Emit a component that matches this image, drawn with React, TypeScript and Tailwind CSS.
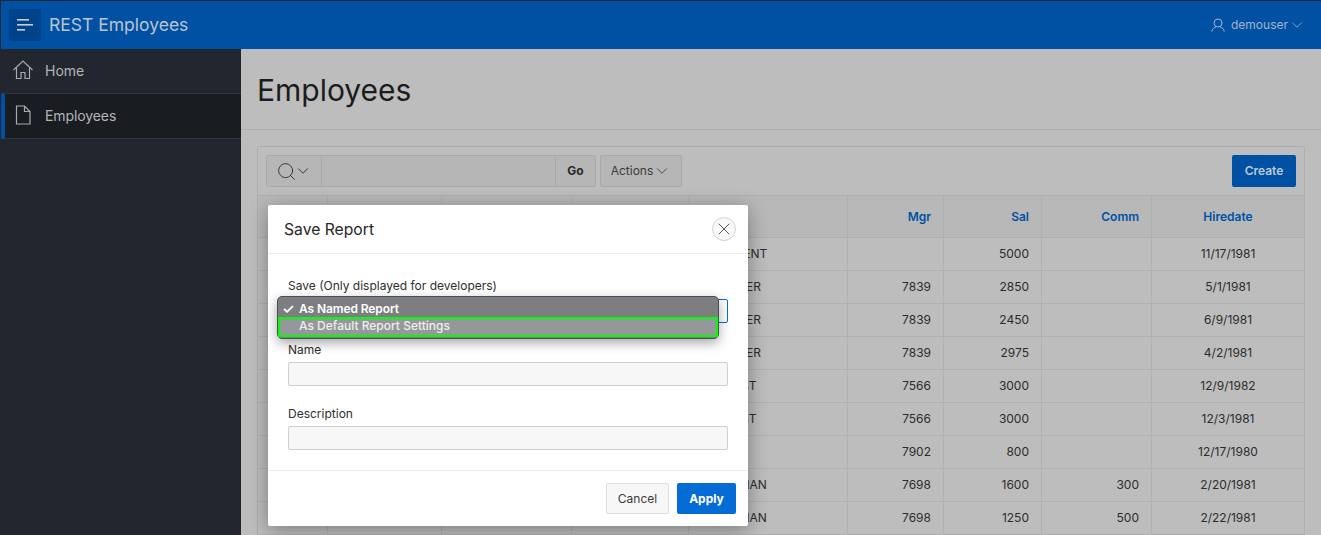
import { ChevronDown, Search, X } from "lucide-react";

const rows = [
  { job: "PRESIDENT", mgr: "", sal: "5000", comm: "", hire: "11/17/1981" },
  { job: "MANAGER", mgr: "7839", sal: "2850", comm: "", hire: "5/1/1981" },
  { job: "MANAGER", mgr: "7839", sal: "2450", comm: "", hire: "6/9/1981" },
  { job: "MANAGER", mgr: "7839", sal: "2975", comm: "", hire: "4/2/1981" },
  { job: "ANALYST", mgr: "7566", sal: "3000", comm: "", hire: "12/9/1982" },
  { job: "ANALYST", mgr: "7566", sal: "3000", comm: "", hire: "12/3/1981" },
  { job: "CLERK", mgr: "7902", sal: "800", comm: "", hire: "12/17/1980" },
  { job: "SALESMAN", mgr: "7698", sal: "1600", comm: "300", hire: "2/20/1981" },
  { job: "SALESMAN", mgr: "7698", sal: "1250", comm: "500", hire: "2/22/1981" },
];

const colTemplate = "grid-cols-[70px_114px_130px_117px_159px_96px_98px_110px_1fr]";

const HomeIcon = () => (
  <svg width="20" height="20" viewBox="0 0 20 20" fill="none" stroke="#a9abae" strokeWidth="1.2">
    <path d="M0.5 10 L10 1 L19.5 10" />
    <path d="M3.5 8 V18.5 H8 V12.5 H12 V18.5 H16.5 V8" />
  </svg>
);

const PageIcon = () => (
  <svg width="16" height="20" viewBox="0 0 16 20" fill="none" stroke="#a9abae" strokeWidth="1.2">
    <path d="M1.5 1 H9.5 L15 6.5 V19 H1.5 Z" />
    <path d="M9.5 1 V6.5 H15" />
  </svg>
);

const UserIcon = () => (
  <svg width="14" height="14" viewBox="0 0 14 14" fill="none" stroke="#a4b4c8" strokeWidth="1">
    <circle cx="7" cy="5" r="4" />
    <path d="M0.8 13.5 C1 10.8 3 9.6 5 9 M13.2 13.5 C13 10.8 11 9.6 9 9" />
  </svg>
);

function HeaderBar() {
  return (
    <header className="h-12 shrink-0 bg-[#0051a3] flex items-center pl-2 pr-[15px]">
      <button className="w-8 h-8 rounded-[2px] bg-[#00438a] flex items-center justify-center">
        <svg width="16" height="12" viewBox="0 0 16 12" fill="#c4ccd6">
          <rect x="0" y="0" width="12" height="1.6" />
          <rect x="0" y="5" width="16" height="1.6" />
          <rect x="0" y="10" width="8" height="1.6" />
        </svg>
      </button>
      <span className="ml-2 text-[17.5px] text-[#bcc4cf]">REST Employees</span>
      <div className="ml-auto flex items-center text-[12px] text-[#a4b4c8]">
        <UserIcon />
        <span className="ml-[6px]">demouser</span>
        <ChevronDown size={18} strokeWidth={1.1} />
      </div>
    </header>
  );
}

function Sidebar() {
  return (
    <nav className="w-[240px] shrink-0 bg-[#22262e] text-[14px] text-[#b4b5b7]">
      <div className="h-[45px] flex items-center gap-3 pl-3 pb-[2px] border-b border-[#32353b]">
        <HomeIcon />
        <span>Home</span>
      </div>
      <div className="h-[45px] flex items-center gap-[14px] pl-[14px] pb-[2px] bg-[#191c20] border-b border-[#32353b] border-l-[4px] border-l-[#0051a3]">
        <span className="-ml-[4px] flex">
          <PageIcon />
        </span>
        <span className="tracking-[-0.1px]">Employees</span>
      </div>
    </nav>
  );
}

function ReportToolbar() {
  return (
    <div className="h-[48px] flex items-center pl-2 pr-2 text-[12px] text-[#2a2a2a]">
      <div className="flex h-8 border border-[#a9a9a9] rounded-[2px] bg-[#b6b6b6]">
        <div className="w-[55px] flex items-center justify-center border-r border-[#a9a9a9]">
          <Search size={21} strokeWidth={1} />
          <ChevronDown size={18} strokeWidth={1.2} className="-ml-[3px]" />
        </div>
        <div className="w-[234px] border-r border-[#a9a9a9]" />
        <div className="w-[39px] flex items-center justify-center font-bold">Go</div>
      </div>
      <div className="ml-1 h-8 w-[82px] flex items-center justify-center border border-[#a9a9a9] rounded-[2px] bg-[#b6b6b6] text-[#3a3a3a]">
        Actions
        <ChevronDown size={18} strokeWidth={1.1} />
      </div>
      <button className="ml-auto h-8 w-16 rounded-[2px] bg-[#0051a3] text-[#bcc9d8] font-semibold">Create</button>
    </div>
  );
}

function ReportTable() {
  const cell = "border-r border-[#b0b0b0] last:border-r-0";
  return (
    <div className="text-[12px]">
      <div className={`grid ${colTemplate} h-[43px] bg-[#b8b8b8] border-y border-[#aeaeae] font-semibold text-[#0051a3]`}>
        <div className={cell} />
        <div className={cell} />
        <div className={cell} />
        <div className={cell} />
        <div className={cell} />
        <div className={`${cell} flex items-center justify-end pr-3`}>Mgr</div>
        <div className={`${cell} flex items-center justify-end pr-3`}>Sal</div>
        <div className={`${cell} flex items-center justify-end pr-3`}>Comm</div>
        <div className={`${cell} flex items-center justify-center`}>Hiredate</div>
      </div>
      {rows.map((row, i) => (
        <div key={i} className={`grid ${colTemplate} h-[33px] border-b border-[#b0b0b0] text-[#2c2c2c]`}>
          <div className={cell} />
          <div className={cell} />
          <div className={cell} />
          <div className={cell} />
          <div className={`${cell} flex items-center pl-[12px]`}>{row.job}</div>
          <div className={`${cell} flex items-center justify-end pr-3`}>{row.mgr}</div>
          <div className={`${cell} flex items-center justify-end pr-3`}>{row.sal}</div>
          <div className={`${cell} flex items-center justify-end pr-3`}>{row.comm}</div>
          <div className={`${cell} flex items-center justify-center`}>{row.hire}</div>
        </div>
      ))}
    </div>
  );
}

function SaveReportDialog() {
  return (
    <div className="absolute left-[268px] top-[205px] w-[480px] h-[321px] bg-white rounded-[2px] shadow-[0_4px_20px_rgba(0,0,0,0.35)] flex flex-col text-[#2e2e2e]">
      <div className="h-[49px] shrink-0 flex items-center justify-between pl-4 pr-3 border-b border-[#ececec]">
        <h2 className="text-[15.7px] text-[#262626] pt-[2px]">Save Report</h2>
        <button className="w-6 h-6 rounded-full border border-[#d4d4d4] bg-[#f8f8f8] flex items-center justify-center">
          <X size={20} strokeWidth={1} color="#333" />
        </button>
      </div>
      <div className="flex-1 px-5 pt-[24px] text-[12px]">
        <div className="leading-4">Save (Only displayed for developers)</div>
        <div className="relative mt-[5px] h-[24px] border border-[#056cd6] rounded-[2px]">
          <div className="absolute -left-[12px] -top-[4px] w-[442px] h-[43px] rounded-[5px] border border-[#4c4e52] bg-[#7c7e82] shadow-[0_4px_12px_rgba(0,0,0,0.35)] font-semibold text-white">
            <div className="h-[20px] flex items-center pl-[4px] pt-[3px]">
              <span className="w-[17px] text-[14px] leading-none">✓</span>
              <span className="tracking-[-0.1px]">As Named Report</span>
            </div>
            <div className="h-[20px] flex items-center pl-[19px] pb-[2px] bg-[#95989b] border-2 border-[#00ff00] rounded-[1px] text-[#eeeeee] font-medium">
              As Default Report Settings
            </div>
          </div>
        </div>
        <div className="mt-[19px] leading-4">Name</div>
        <div className="mt-[4px] h-6 border border-[#cfcfcf] rounded-[2px] bg-[#f7f7f7]" />
        <div className="mt-[20px] leading-4">Description</div>
        <div className="mt-[4px] h-6 border border-[#cfcfcf] rounded-[2px] bg-[#f7f7f7]" />
      </div>
      <div className="h-[56px] shrink-0 flex items-center justify-end gap-2 px-3 border-t border-[#ececec] text-[12px]">
        <button className="w-[63px] h-[31px] border border-[#dedede] rounded-[2px] bg-[#f7f7f7] text-[#3a3a3a]">Cancel</button>
        <button className="w-[59px] h-[31px] rounded-[2px] bg-[#056cd6] text-white font-bold">Apply</button>
      </div>
    </div>
  );
}

export default function App() {
  return (
    <div className="relative w-[1321px] h-[535px] overflow-hidden bg-[#22262e] pt-px pl-px font-['Inter','Liberation_Sans',sans-serif]">
      <div className="flex flex-col h-full">
        <HeaderBar />
        <div className="flex flex-1 min-h-0">
          <Sidebar />
          <main className="flex-1 min-w-0 bg-[#bdbdbd]">
            <div className="h-[81px] flex items-center pl-4 pt-[2px] border-b border-[#adadad]">
              <h1 className="text-[30px] text-[#1c1c1c]">Employees</h1>
            </div>
            <div className="ml-4 mr-4 mt-4 border border-[#aeaeae] rounded-t-[2px] border-b-0">
              <ReportToolbar />
              <ReportTable />
            </div>
          </main>
        </div>
      </div>
      <SaveReportDialog />
    </div>
  );
}
